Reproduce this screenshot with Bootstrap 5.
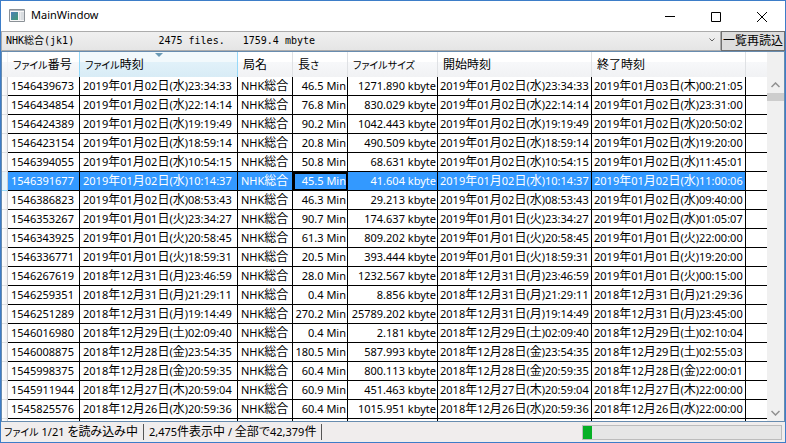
<!DOCTYPE html>
<html lang="ja">
<head>
<meta charset="utf-8">
<meta name="viewport" content="width=device-width, initial-scale=1">
<title>MainWindow</title>
<link href="https://cdn.jsdelivr.net/npm/bootstrap@5.3.0/dist/css/bootstrap.min.css" rel="stylesheet">
<style>
  body { font: 11px/18px "Noto Sans", "Noto Sans CJK JP", sans-serif; color: #000; }
  .app-window { border: 1px solid #3d7dc8; background: #f0eded; }
  .jp { font-size: 12px; line-height: 1; font-feature-settings: "palt"; }
  .kana { font-size: 10px; }
  .title-bar { height: 30px; padding-left: 8px; }
  .title-bar h1 { font-size: 11px; line-height: 28px; font-weight: 400; margin-left: 6px; }
  .caption-btn { width: 46px; height: 29px; border: 0; background: none; color: #000; }
  .tool-row { height: 20px; }
  .channel-select { height: 20px; padding: 0 20px 1px 4px; border: 1px solid #acacac; border-radius: 0; color: #000;
    background: linear-gradient(#f0f0f0, #e5e5e5); font: 10px/16px "DejaVu Sans Mono", "Noto Sans CJK JP", monospace; appearance: none; }
  .select-arrow { top: 6px; right: 6px; pointer-events: none; }
  .reload-btn { height: 20px; padding: 0 1px; border: 1px solid #707070; border-radius: 0; background: #ddd; color: #000; font-size: 12px; line-height: 18px; }
  .grid-frame { border: 1px solid #688caf; background: #fff; min-height: 0; }
  .data-grid { table-layout: fixed; width: 100%; border-collapse: separate; border-spacing: 0; white-space: nowrap; }
  .data-grid th { position: relative; height: 25px; padding: 0 0 0 5px; font-weight: 400; border-right: 1px solid #dfe1e4;
    background: linear-gradient(#fff 40%, #f7f8fa 41%, #f1f2f4); }
  .data-grid th:first-child { border-right-color: #f1f2f4; }
  .data-grid th:last-child { border-right: 0; }
  .data-grid th.sorted { border-right-color: #96d9f9; box-shadow: -1px 0 #96d9f9; background: linear-gradient(#f2f9fc 40%, #e1f1f9 41%, #d8ecf6); }
  .sort-mark { top: 1px; left: 50%; margin-left: -4px; }
  .data-grid td { height: 19px; padding: 0 2px 0 3px; line-height: 18px; border-right: 1px solid #000; border-bottom: 1px solid #000; overflow: hidden; }
  .data-grid td.row-head { padding: 0; border-right-color: #c9cbd0; border-bottom-color: #dfe1e4; background: linear-gradient(90deg, #fff, #f1f2f4); }
  .data-grid td.num { padding: 0 1px 0 0; text-align: right; }
  .data-grid td.stamp { padding: 0 0 0 2px; }
  .data-grid td:last-child { border-right: 0; }
  .data-grid tr.picked td:not(.row-head):not(:last-child) { background: #39f; color: #fff; }
  .data-grid tr.picked td.row-head { border-bottom-color: #96d9f9; background: #e6f4fb; }
  .data-grid td.focused { outline: 2px solid #000; outline-offset: -2px; }
  .scroll-rail { width: 17px; padding-top: 25px; background: #f0f0f0; }
  .scroll-btn { width: 17px; height: 16px; padding: 0; border: 0; background: none; line-height: 0; color: #909090; }
  .scroll-thumb { height: 8px; background: #cdcdcd; }
  .status-bar { height: 20px; padding: 0 3px; }
  .status-cell { border-right: 1px solid #555; height: 16px; line-height: 16px; padding-right: 5px; margin-right: 5px; white-space: nowrap; }
  .load-progress { width: 200px; height: 15px; border: 1px solid #bcbcbc; border-radius: 0; background: #e6e6e6; }
  .load-progress .progress-bar { background: #06b025; }
</style>
<script src="https://cdn.jsdelivr.net/npm/bootstrap@5.3.0/dist/js/bootstrap.bundle.min.js"></script>
</head>
<body>
<div class="app-window vh-100 d-flex flex-column overflow-hidden">
  <header class="title-bar d-flex align-items-start bg-white flex-shrink-0">
    <svg class="mt-2 flex-shrink-0" width="16" height="13" viewBox="0 0 16 13" aria-hidden="true">
      <defs><linearGradient id="pane" x2="1" y2="1"><stop stop-color="#4b7fb8"/><stop offset="1" stop-color="#3f9a72"/></linearGradient></defs>
      <path fill="#f7f7f7" stroke="#8b9197" d="M.5.5h15v12H.5z"/>
      <path fill="#b4bbc2" d="M1 1h14v1H1z"/>
      <path fill="url(#pane)" d="M2 3h7v8H2z"/>
      <path fill="#d9dde1" d="M10 3h1.500v8H10zM12 3h3v8h-3z"/>
    </svg>
    <h1 class="flex-grow-1 mb-0">MainWindow</h1>
    <button class="caption-btn" type="button" aria-label="最小化"><svg width="10" height="10"><path d="M0 4.500h10" stroke="#000"/></svg></button>
    <button class="caption-btn" type="button" aria-label="最大化"><svg width="10" height="10"><path d="M.5.5h9v9h-9z" fill="none" stroke="#000"/></svg></button>
    <button class="caption-btn" type="button" aria-label="閉じる"><svg width="10" height="10"><path d="M0 0l10 10M10 0L0 10" stroke="#000"/></svg></button>
  </header>

  <div class="tool-row d-flex flex-shrink-0">
    <div class="position-relative flex-grow-1">
      <select class="channel-select w-100 d-block" aria-label="チャンネル">
        <option>NHK総合(jk1)&nbsp;&nbsp;&nbsp;&nbsp;&nbsp;&nbsp;&nbsp;&nbsp;&nbsp;&nbsp;&nbsp;&nbsp;&nbsp;&nbsp;2475 files.&nbsp;&nbsp;&nbsp;1759.4 mbyte</option>
      </select>
      <svg class="select-arrow position-absolute" width="6" height="6" aria-hidden="true"><path d="M.5 1.500L3 4l2.500-2.500" fill="none" stroke="#606060"/></svg>
    </div>
    <button class="reload-btn flex-shrink-0" type="button">一覧再読込</button>
  </div>

  <main class="grid-frame d-flex flex-grow-1 overflow-hidden">
    <div class="flex-grow-1 overflow-hidden">
      <table class="data-grid">
        <colgroup>
          <col style="width:6px"><col style="width:72px"><col style="width:158px"><col style="width:55px"><col style="width:55px"><col style="width:90px"><col style="width:154px"><col style="width:154px"><col>
        </colgroup>
        <thead>
          <tr>
            <th class="p-0"></th>
            <th scope="col"><span class="jp"><span class="kana">ファイル</span>番号</span></th>
            <th scope="col" class="sorted" aria-sort="descending"><svg class="sort-mark position-absolute" width="8" height="4" aria-hidden="true"><path d="M0 0h8L4 4z" fill="#6a9ab5"/></svg><span class="jp"><span class="kana">ファイル</span>時刻</span></th>
            <th scope="col"><span class="jp">局名</span></th>
            <th scope="col"><span class="jp">長<span class="kana">さ</span></span></th>
            <th scope="col"><span class="jp kana">ファイルサイズ</span></th>
            <th scope="col"><span class="jp">開始時刻</span></th>
            <th scope="col"><span class="jp">終了時刻</span></th>
            <th class="p-0"></th>
          </tr>
        </thead>
        <tbody id="rows"></tbody>
      </table>
    </div>
    <div class="scroll-rail d-flex flex-column flex-shrink-0">
      <button class="scroll-btn" type="button" aria-label="上へ"><svg width="9" height="6"><path d="M.5 5l4-4 4 4" fill="none" stroke="currentColor" stroke-width="1.500"/></svg></button>
      <div class="scroll-thumb"></div>
      <button class="scroll-btn mt-auto" type="button" aria-label="下へ"><svg width="9" height="6"><path d="M.5 1l4 4 4-4" fill="none" stroke="currentColor" stroke-width="1.500"/></svg></button>
    </div>
  </main>

  <footer class="status-bar d-flex align-items-center flex-shrink-0">
    <div class="status-cell"><span class="jp kana">ファイル</span> 1/21 <span class="jp">を読み込み中</span></div>
    <div class="status-cell">2,475<span class="jp">件表示中</span> / <span class="jp">全部で</span>42,379<span class="jp">件</span></div>
    <div class="load-progress progress ms-auto" role="progressbar" aria-label="読み込み" aria-valuenow="1" aria-valuemin="0" aria-valuemax="21">
      <div class="progress-bar" style="width:4.76%"></div>
    </div>
  </footer>
</div>

<script>
  // id, start, minutes, kbytes, end
  const files = [
    ["1546439673", "2019年01月02日(水)23:34:33", "46.5", "1271.890", "2019年01月03日(木)00:21:05"],
    ["1546434854", "2019年01月02日(水)22:14:14", "76.8", "830.029", "2019年01月02日(水)23:31:00"],
    ["1546424389", "2019年01月02日(水)19:19:49", "90.2", "1042.443", "2019年01月02日(水)20:50:02"],
    ["1546423154", "2019年01月02日(水)18:59:14", "20.8", "490.509", "2019年01月02日(水)19:20:00"],
    ["1546394055", "2019年01月02日(水)10:54:15", "50.8", "68.631", "2019年01月02日(水)11:45:01"],
    ["1546391677", "2019年01月02日(水)10:14:37", "45.5", "41.604", "2019年01月02日(水)11:00:06"],
    ["1546386823", "2019年01月02日(水)08:53:43", "46.3", "29.213", "2019年01月02日(水)09:40:00"],
    ["1546353267", "2019年01月01日(火)23:34:27", "90.7", "174.637", "2019年01月02日(水)01:05:07"],
    ["1546343925", "2019年01月01日(火)20:58:45", "61.3", "809.202", "2019年01月01日(火)22:00:00"],
    ["1546336771", "2019年01月01日(火)18:59:31", "20.5", "393.444", "2019年01月01日(火)19:20:00"],
    ["1546267619", "2018年12月31日(月)23:46:59", "28.0", "1232.567", "2019年01月01日(火)00:15:00"],
    ["1546259351", "2018年12月31日(月)21:29:11", "0.4", "8.856", "2018年12月31日(月)21:29:36"],
    ["1546251289", "2018年12月31日(月)19:14:49", "270.2", "25789.202", "2018年12月31日(月)23:45:00"],
    ["1546016980", "2018年12月29日(土)02:09:40", "0.4", "2.181", "2018年12月29日(土)02:10:04"],
    ["1546008875", "2018年12月28日(金)23:54:35", "180.5", "587.993", "2018年12月29日(土)02:55:03"],
    ["1545998375", "2018年12月28日(金)20:59:35", "60.4", "800.113", "2018年12月28日(金)22:00:01"],
    ["1545911944", "2018年12月27日(木)20:59:04", "60.9", "451.463", "2018年12月27日(木)22:00:00"],
    ["1545825576", "2018年12月26日(水)20:59:36", "60.4", "1015.951", "2018年12月26日(水)22:00:00"]
  ];
  const picked = "1546391677";
  const jp = s => s.replace(/[\u3040-\u9fff]+/g, m => `<span class="jp">${m}</span>`);
  document.getElementById("rows").innerHTML = files.map(([id, start, min, size, end]) => `
    <tr class="${id === picked ? "picked" : ""}">
      <td class="row-head"></td><td>${id}</td><td>${jp(start)}</td><td>${jp("NHK総合")}</td>
      <td class="num ${id === picked ? "focused" : ""}">${min} Min</td><td class="num">${size} kbyte</td>
      <td class="stamp">${jp(start)}</td><td class="stamp">${jp(end)}</td><td></td>
    </tr>`).join("") + `<tr><td class="row-head"></td>${"<td></td>".repeat(8)}</tr>`;
</script>
</body>
</html>
